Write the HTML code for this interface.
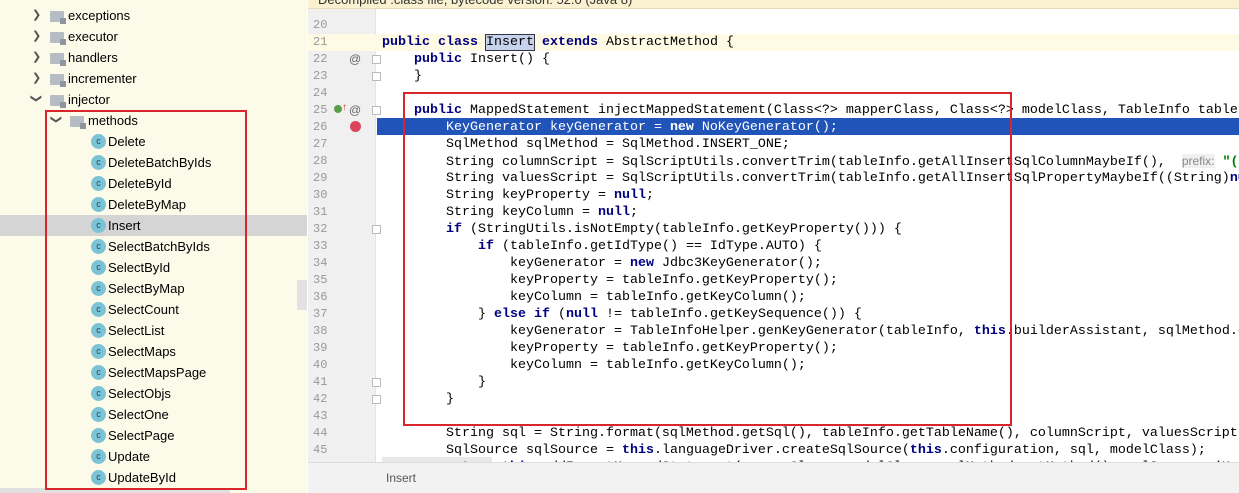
<!DOCTYPE html>
<html><head><meta charset="utf-8"><style>
*{margin:0;padding:0;box-sizing:border-box}
body{width:1239px;height:493px;overflow:hidden;position:relative;background:#fff;font-family:"Liberation Sans",sans-serif}
#left{position:absolute;left:0;top:0;width:307px;height:493px;background:#fcfbea}
.tr{position:absolute;height:21px;line-height:21px;font-size:13px;color:#000;white-space:nowrap}
.arr{position:absolute;font-size:11px;color:#555}
.fold{position:absolute;width:14px;height:11px;background:#b6bcc4;border-radius:1px}
.fold:after{content:"";position:absolute;right:-2px;bottom:-2px;width:6px;height:6px;background:#8d959e}
.ci{position:absolute;width:15px;height:15px;border-radius:50%;background:#7cc3d6;font-size:9px;line-height:15px;text-align:center;color:#1b4d5e}
#ed{position:absolute;left:308px;top:0;width:931px;height:493px;background:#fff}
#banner{position:absolute;left:308px;top:0;width:931px;height:9px;background:#f9f1d0;border-bottom:1px solid #e5dcb8;overflow:hidden}
#banner span{position:absolute;left:10px;top:-8px;font-size:13px;color:#333}
#gut{position:absolute;left:308px;top:9px;width:68px;height:453px;background:#f0f0f0;border-right:1px solid #e3e3e3}
.ln{position:absolute;left:313px;font-family:"Liberation Mono",monospace;font-size:12px;color:#999;height:17px;line-height:17px}
.cl{position:absolute;left:382px;font-family:"Liberation Mono",monospace;font-size:13.33px;height:17px;line-height:17px;white-space:pre;color:#000}
.k{color:#000080;font-weight:bold}
.sel .k{color:#fff}
#bot{position:absolute;left:308px;top:462px;width:931px;height:31px;background:#f2f2f2;border-top:1px solid #ddd}
.red{position:absolute;border:2px solid #d9262c}
#code{position:absolute;left:0;top:0;width:1239px;height:493px;overflow:hidden}
</style></head><body>
<div id="left">
<div style="position:absolute;left:0;top:215px;width:307px;height:21px;background:#d5d5d5"></div>
<div style="position:absolute;left:297px;top:280px;width:10px;height:30px;background:#e2e2e2"></div>
<div style="position:absolute;left:0;top:488px;width:230px;height:5px;background:#e0e0e0"></div>
</div>
<div id="ed"></div>
<div id="banner"><span>Decompiled .class file, bytecode version: 52.0 (Java 8)</span></div>
<div id="gut"></div>
<div style="position:absolute;left:308px;top:34px;width:931px;height:17px;background:#fffae3"></div>
<div style="position:absolute;left:377px;top:118px;width:862px;height:17px;background:#2154b8"></div>
<div style="position:absolute;left:382px;top:457px;width:110px;height:5px;background:#e8e8e8"></div>
<div id="bot"><span style="position:absolute;left:78px;top:8px;font-size:12px;color:#555">Insert</span></div>
<div id="tree"></div>
<div id="code"></div>
<div class="red" style="left:45px;top:110px;width:202px;height:380px"></div>
<div class="red" style="left:403px;top:92px;width:609px;height:334px"></div>
<script>
var t=document.getElementById('tree'),h='';
var dirs=[['exceptions',0,'>'],['executor',0,'>'],['handlers',0,'>'],['incrementer',0,'>'],['injector',0,'v'],['methods',1,'v']];
dirs.forEach(function(d,i){var y=5+i*21,x=d[1]?70:50;
h+='<div class="arr" style="left:'+(x-18)+'px;top:'+(y+3)+'px;'+(d[2]=='v'?'transform:rotate(90deg);':'')+'">&#10095;</div>';
h+='<div class="fold" style="left:'+x+'px;top:'+(y+6)+'px"></div><div class="tr" style="left:'+(x+18)+'px;top:'+y+'px">'+d[0]+'</div>';});
['Delete','DeleteBatchByIds','DeleteById','DeleteByMap','Insert','SelectBatchByIds','SelectById','SelectByMap','SelectCount','SelectList','SelectMaps','SelectMapsPage','SelectObjs','SelectOne','SelectPage','Update','UpdateById'].forEach(function(n,i){var y=131+i*21;
h+='<div class="ci" style="left:91px;top:'+(y+3)+'px">c</div><div class="tr" style="left:108px;top:'+y+'px">'+n+'</div>';});
t.innerHTML=h;
var L={20:'',21:'<b class=k>public class</b> <span style="background:#c7d3ec;outline:1px solid #334">Insert</span> <b class=k>extends</b> AbstractMethod {',
22:'    <b class=k>public</b> Insert() {',23:'    }',24:'',
25:'    <b class=k>public</b> MappedStatement injectMappedStatement(Class&lt;?&gt; mapperClass, Class&lt;?&gt; modelClass, TableInfo tableInfo) {',
26:'        KeyGenerator keyGenerator = <b class=k>new</b> NoKeyGenerator();',
27:'        SqlMethod sqlMethod = SqlMethod.INSERT_ONE;',
28:'        String columnScript = SqlScriptUtils.convertTrim(tableInfo.getAllInsertSqlColumnMaybeIf(),  <span style="font-family:Liberation Sans;font-size:12px;color:#888;background:#f0f0f0">prefix:</span> <span style="color:#008000;font-weight:bold">"(</span>',
29:'        String valuesScript = SqlScriptUtils.convertTrim(tableInfo.getAllInsertSqlPropertyMaybeIf((String)<b class=k>null</b>',
30:'        String keyProperty = <b class=k>null</b>;',31:'        String keyColumn = <b class=k>null</b>;',
32:'        <b class=k>if</b> (StringUtils.isNotEmpty(tableInfo.getKeyProperty())) {',
33:'            <b class=k>if</b> (tableInfo.getIdType() == IdType.AUTO) {',
34:'                keyGenerator = <b class=k>new</b> Jdbc3KeyGenerator();',
35:'                keyProperty = tableInfo.getKeyProperty();',
36:'                keyColumn = tableInfo.getKeyColumn();',
37:'            } <b class=k>else if</b> (<b class=k>null</b> != tableInfo.getKeySequence()) {',
38:'                keyGenerator = TableInfoHelper.genKeyGenerator(tableInfo, <b class=k>this</b>.builderAssistant, sqlMethod.getMethod(),',
39:'                keyProperty = tableInfo.getKeyProperty();',
40:'                keyColumn = tableInfo.getKeyColumn();',
41:'            }',42:'        }',43:'',
44:'        String sql = String.format(sqlMethod.getSql(), tableInfo.getTableName(), columnScript, valuesScript);',
45:'        SqlSource sqlSource = <b class=k>this</b>.languageDriver.createSqlSource(<b class=k>this</b>.configuration, sql, modelClass);'};
var c='';
for(var n=20;n<=46;n++){var y=17+(n-20)*17;
if(n==46){c+='<div style="position:absolute;left:308px;top:'+y+'px;width:931px;height:'+(462-y)+'px;overflow:hidden"><div class="cl" style="left:74px;top:0">        <b class=k>return this</b>.addInsertMappedStatement(mapperClass, modelClass, sqlMethod.getMethod(), sqlSource, (Ke</div></div>';continue;}
c+='<div class="ln" style="top:'+y+'px">'+n+'</div>';
c+='<div class="cl'+(n==26?' sel':'')+'" style="top:'+y+'px;'+(n==26?'color:#fff':'')+'">'+L[n]+'</div>';}
c+='<div style="position:absolute;left:349px;top:52px;font-size:12px;color:#666">@</div>';
c+='<div style="position:absolute;left:349px;top:103px;font-size:12px;color:#666">@</div>';
c+='<div style="position:absolute;left:334px;top:105px;width:8px;height:8px;border-radius:50%;background:#5a9e4a"></div><div style="position:absolute;left:342px;top:102px;font-size:10px;color:#c33">&#8593;</div>';
c+='<div style="position:absolute;left:350px;top:121px;width:11px;height:11px;border-radius:50%;background:#d9445a"></div>';
[22,23,25,32,41,42].forEach(function(n){c+='<div style="position:absolute;left:372px;top:'+(17+(n-20)*17+4)+'px;width:9px;height:9px;border:1px solid #bbb;background:#fff"></div>';});
document.getElementById('code').innerHTML=c;
</script>
</body></html>
